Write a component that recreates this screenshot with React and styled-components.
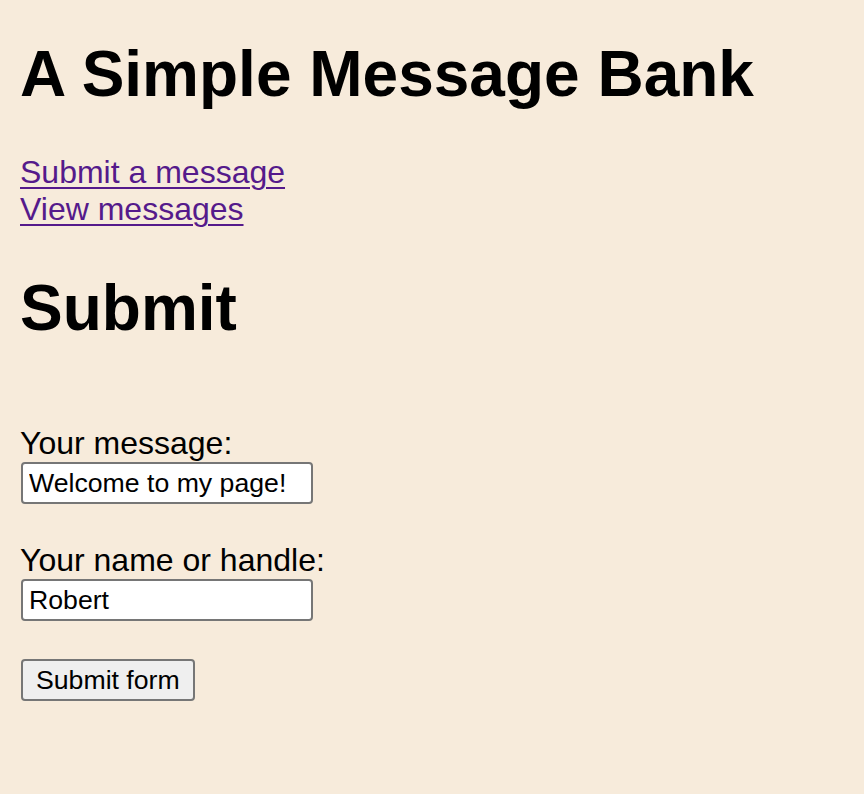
import styled, { createGlobalStyle } from "styled-components";

const GlobalStyle = createGlobalStyle`
  html, body {
    margin: 0;
    padding: 0;
    background-color: #f7ebdb;
  }
  body {
    font-family: "Liberation Sans", Arial, Helvetica, sans-serif;
    color: #000;
  }
`;

const Page = styled.div`
  padding: 37px 20px 60px;
`;

const Title = styled.h1`
  margin: 0 0 43px;
  font-size: 64px;
  line-height: 74px;
  font-weight: bold;
`;

const Nav = styled.nav`
  display: flex;
  flex-direction: column;
  align-items: flex-start;
  margin-bottom: 43px;
`;

const NavLink = styled.a`
  font-size: 32px;
  line-height: 37px;
  color: #551a8b;
  text-decoration: underline;
  text-decoration-thickness: 2px;
  text-underline-offset: 4px;
`;

const Form = styled.form`
  display: flex;
  flex-direction: column;
  align-items: flex-start;
  gap: 38px;
  margin-top: 80px;
`;

const Field = styled.div`
  display: flex;
  flex-direction: column;
  align-items: flex-start;
`;

const Label = styled.label`
  font-size: 32px;
  line-height: 37px;
`;

const TextInput = styled.input`
  box-sizing: border-box;
  width: 292px;
  height: 42px;
  margin: 0 0 0 1px;
  padding: 0 6px;
  border: 2px solid #767676;
  border-radius: 4px;
  background: #fff;
  font-family: "Liberation Sans", Arial, Helvetica, sans-serif;
  font-size: 26.67px;
  color: #000;
  outline: none;
`;

const SubmitButton = styled.button`
  box-sizing: border-box;
  height: 42px;
  margin-left: 1px;
  padding: 0 13px;
  border: 2px solid #767676;
  border-radius: 4px;
  background: #efefef;
  font-family: "Liberation Sans", Arial, Helvetica, sans-serif;
  font-size: 26.67px;
  color: #000;
`;

export default function App() {
  return (
    <>
      <GlobalStyle />
      <Page>
        <Title>A Simple Message Bank</Title>
        <Nav>
          <NavLink href="#submit">Submit a message</NavLink>
          <NavLink href="#view">View messages</NavLink>
        </Nav>
        <Title as="h2">Submit</Title>
        <Form onSubmit={(e) => e.preventDefault()}>
          <Field>
            <Label htmlFor="message">Your message:</Label>
            <TextInput id="message" defaultValue="Welcome to my page!" />
          </Field>
          <Field>
            <Label htmlFor="name">Your name or handle:</Label>
            <TextInput id="name" defaultValue="Robert" />
          </Field>
          <SubmitButton type="submit">Submit form</SubmitButton>
        </Form>
      </Page>
    </>
  );
}
